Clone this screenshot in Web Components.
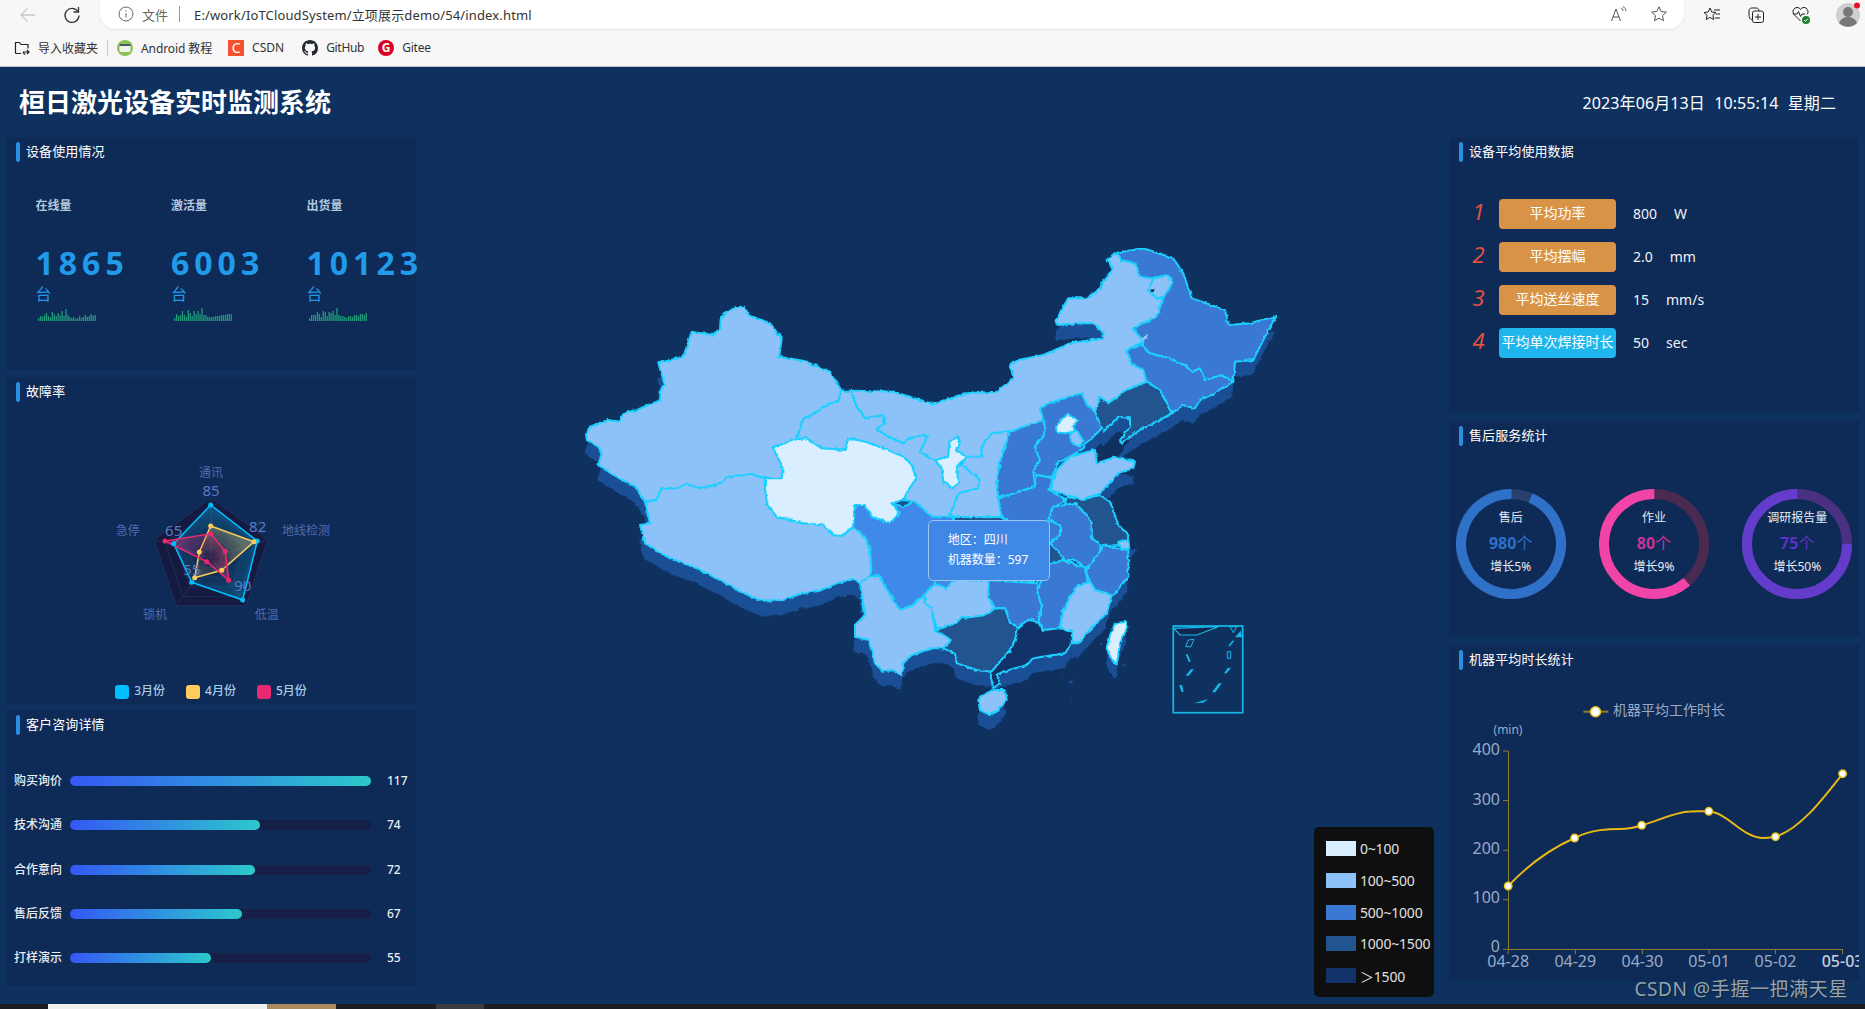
<!DOCTYPE html>
<html lang="zh">
<head>
<meta charset="utf-8">
<title>桓日激光设备实时监测系统</title>
<style>
  html, body { margin: 0; height: 100%; overflow: hidden; background: #0e315f; }
  body { font-family: "Noto Sans", "Noto Sans CJK SC", sans-serif; font-size: 12px; color: #fff; }
</style>
</head>
<body>
<x-browser-bar></x-browser-bar>
<x-dashboard>
  <div slot="left" style="display:contents">
    <x-panel title="设备使用情况" style="--h:233px">
      <x-stat-row>
        <x-stat label="在线量" value="1865" seed="3"></x-stat>
        <x-stat label="激活量" value="6003" seed="5"></x-stat>
        <x-stat label="出货量" value="10123" seed="7"></x-stat>
      </x-stat-row>
    </x-panel>
    <x-panel title="故障率" style="--h:327px"><x-radar></x-radar></x-panel>
    <x-panel title="客户咨询详情" style="--h:276px">
      <x-rank-list>
        <x-rank label="购买询价" value="117" width="301"></x-rank>
        <x-rank label="技术沟通" value="74" width="190"></x-rank>
        <x-rank label="合作意向" value="72" width="185"></x-rank>
        <x-rank label="售后反馈" value="67" width="172"></x-rank>
        <x-rank label="打样演示" value="55" width="141"></x-rank>
      </x-rank-list>
    </x-panel>
  </div>
  <x-china-map slot="center"></x-china-map>
  <div slot="right" style="display:contents">
    <x-panel title="设备平均使用数据" style="--h:276px">
      <x-avg-list>
        <x-avg num="1" label="平均功率" value="800" unit="W"></x-avg>
        <x-avg num="2" label="平均摆幅" value="2.0" unit="mm"></x-avg>
        <x-avg num="3" label="平均送丝速度" value="15" unit="mm/s"></x-avg>
        <x-avg num="4" label="平均单次焊接时长" value="50" unit="sec" active></x-avg>
      </x-avg-list>
    </x-panel>
    <x-panel title="售后服务统计" style="--h:216px">
      <x-donut-row>
        <x-donut name="售后" value="980" growth="增长5%" start="23" color="#2f70c8" track="#29406e" text="#2f70c8"></x-donut>
        <x-donut name="作业" value="80" growth="增长9%" start="139" color="#f044a8" track="#4a2a50" text="#c83596"></x-donut>
        <x-donut name="调研报告量" value="75" growth="增长50%" start="90" color="#643ccc" track="#4a3080" text="#5a34c4"></x-donut>
      </x-donut-row>
    </x-panel>
    <x-panel title="机器平均时长统计" style="--h:336px"><x-line-chart></x-line-chart></x-panel>
  </div>
</x-dashboard>
<x-bottom-strip></x-bottom-strip>

<script>
// browser chrome on top of the page
class BrowserBar extends HTMLElement {
  constructor() {
    super();
    this.attachShadow({ mode: 'open' });
    this.shadowRoot.innerHTML = `
      <style>
        :host { display: block; height: 67px; box-sizing: border-box; background: #f7f7f7; border-bottom: 1px solid #c4c4c4; color: #333; font-size: 12px; }
        .top { height: 32px; display: flex; align-items: flex-start; }
        .nav { width: 100px; height: 30px; flex: none; position: relative; }
        .nav svg { position: absolute; top: 5px; }
        .pill { flex: 1; height: 30px; margin-top: -1px; background: #fff; border-radius: 0 0 15px 15px; display: flex; align-items: center; padding-left: 18px; box-shadow: 0 1px 2px rgba(0,0,0,.08); }
        .file { color: #666; font-size: 13px; margin-left: 8px; }
        .sep { width: 1px; height: 16px; background: #999; margin: 0 13px 0 11px; }
        .url { font-size: 13px; color: #333; letter-spacing: .14px; margin-left: 1px; }
        .sp { flex: 1; }
        .tools { width: 181px; flex: none; display: flex; align-items: center; height: 30px; padding-left: 19px; gap: 26px; box-sizing: border-box; }
        .marks { height: 33px; display: flex; align-items: center; padding-left: 14px; margin-top: -1px; }
        .mk { display: flex; align-items: center; gap: 8px; margin-right: 9px; }
        .bsep { width: 1px; height: 16px; background: #ccc; margin: 0 9px 0 0; }
        .csdn { width: 16px; height: 16px; background: #f4512c; color: #fff; text-align: center; line-height: 16px; font-size: 14px; }
        .gitee { width: 16px; height: 16px; border-radius: 50%; background: #d9001f; color: #fff; text-align: center; line-height: 16px; font-size: 12px; font-weight: 700; }
      </style>
      <div class="top">
        <div class="nav">
          <svg style="left:19px" width="18" height="20" viewBox="0 0 18 20" fill="none" stroke="#c9c9c9" stroke-width="1.3"><path d="M16 10H2M8.5 3.5 2 10l6.5 6.500"/></svg>
          <svg style="left:63px" width="18" height="20" viewBox="0 0 18 20" fill="none" stroke="#333" stroke-width="1.3"><path d="M14.800 6.500A7 7 0 1 0 16 10.500"/><path d="M15.500 2v5h-5"/></svg>
        </div>
        <div class="pill">
          <svg width="16" height="16" viewBox="0 0 16 16" fill="none" stroke="#666"><circle cx="8" cy="8" r="7"/><path d="M8 7v4.500M8 4.200v1.300"/></svg>
          <span class="file">文件</span><span class="sep"></span>
          <span class="url">E:/work/IoTCloudSystem/立项展示demo/54/index.html</span>
          <span class="sp"></span>
          <svg style="margin-right:22px" width="18" height="18" viewBox="0 0 18 18" fill="none" stroke="#555"><path d="M1.500 16 6 4l4.500 12M3 12h6"/><path d="M11 3c1.200.6 1.800 1.500 2 3M13 1.500c1.800 1 2.800 2.500 3 4.500"/></svg>
          <svg style="margin-right:16px" width="18" height="18" viewBox="0 0 18 18" fill="none" stroke="#555"><path d="m9 1.800 2.200 4.700 5.100.6-3.800 3.500 1 5.100L9 13.200l-4.500 2.500 1-5.100L1.700 7.100l5.100-.6z"/></svg>
        </div>
        <div class="tools">
          <svg width="18" height="18" viewBox="0 0 18 18" fill="none" stroke="#222"><path d="m7 2 1.800 4 4.200.5-3.100 2.900.9 4.100L7 11.400 3.200 13.500l.9-4.100L1 6.500 5.200 6z"/><path d="M11 4h6M13 8h4M12 12h5"/></svg>
          <svg width="18" height="18" viewBox="0 0 18 18" fill="none" stroke="#222"><rect x="5.500" y="5" width="11" height="11.500" rx="2"/><path d="M11 8v6M8 11h6M5 14C3 13 2 11.500 2 9V5c0-2 1-3 3-3h4c2 0 3 1 3 3"/></svg>
          <svg width="20" height="20" viewBox="0 0 20 20" fill="none" stroke="#222"><path d="M9.500 16 3 9.500C.5 6.500 3 2.500 6 2.500c1.500 0 2.800.7 3.500 2 .7-1.300 2-2 3.500-2 3 0 5.500 4 3 7"/><path d="M2 9h4l1.500-2.500 2 5L11 9h3"/><circle cx="15" cy="15" r="4" fill="#1b7f2a" stroke="none"/><path d="m13 15 1.500 1.500 2.500-3" stroke="#fff"/></svg>
          <svg width="26" height="26" viewBox="0 0 26 26" style="margin-left:-2px;margin-top:-1px"><circle cx="13" cy="13" r="12" fill="#cfcfcf"/><circle cx="13" cy="10" r="5" fill="#777"/><path d="M4 21c2-5 6-6 9-6s7 1 9 6c-5 5-13 5-18 0z" fill="#777"/><circle cx="22" cy="3.500" r="3" fill="#e81123"/></svg>
        </div>
      </div>
      <div class="marks">
        <div class="mk"><svg width="16" height="16" viewBox="0 0 16 16" fill="none" stroke="#222" stroke-width="1.200"><path d="M7 13.500H2.500a1 1 0 0 1-1-1V2.500h4l1.500 2h7v4"/><path d="M9 12h6M13 10l2 2-2 2M11 14.500l-2-2"/></svg><span>导入收藏夹</span></div>
        <span class="bsep"></span>
        <div class="mk"><svg width="16" height="16" viewBox="0 0 16 16"><circle cx="8" cy="8" r="8" fill="#8cc152"/><rect x="2.500" y="4" width="11" height="8" rx="1" fill="#eef3ea"/><rect x="2.500" y="4" width="11" height="2" fill="#44586a"/></svg><span style="letter-spacing:-.1px">Android 教程</span></div>
        <div class="mk" style="margin-left:7px"><span class="csdn">C</span><span>CSDN</span></div>
        <div class="mk" style="margin-left:9px"><svg width="16" height="16" viewBox="0 0 16 16" fill="#24292f"><path d="M8 0C3.580 0 0 3.580 0 8c0 3.540 2.290 6.530 5.470 7.590.4.070.55-.17.55-.38 0-.19-.01-.82-.01-1.490-2.010.37-2.530-.49-2.690-.94-.09-.23-.48-.94-.82-1.130-.28-.15-.68-.52-.01-.53.63-.01 1.080.58 1.230.82.720 1.210 1.870.87 2.330.66.070-.52.280-.87.510-1.070-1.780-.2-3.640-.89-3.640-3.950 0-.87.310-1.590.820-2.150-.08-.2-.36-1.020.08-2.120 0 0 .67-.21 2.200.82.640-.18 1.320-.27 2-.27.680 0 1.360.090 2 .27 1.530-1.040 2.200-.82 2.200-.82.440 1.100.160 1.920.080 2.120.510.560.820 1.270.820 2.150 0 3.070-1.870 3.750-3.650 3.950.290.250.540.730.540 1.480 0 1.070-.01 1.930-.01 2.200 0 .210.150.460.550.380A8.013 8.013 0 0 0 16 8c0-4.420-3.580-8-8-8z"/></svg><span style="letter-spacing:-.3px">GitHub</span></div>
        <div class="mk" style="margin-left:5px"><span class="gitee">G</span><span style="letter-spacing:-.2px">Gitee</span></div>
      </div>`;
  }
}
customElements.define('x-browser-bar', BrowserBar);

// main frame: header row, then three columns
class Dashboard extends HTMLElement {
  constructor() {
    super();
    this.attachShadow({ mode: 'open' });
    this.shadowRoot.innerHTML = `
      <style>
        :host { display: block; height: 937px; position: relative; background: #0e315f; overflow: hidden; }
        header { height: 70px; box-sizing: border-box; display: flex; justify-content: space-between; align-items: center; padding: 0 29px 0 19px; }
        h1 { margin: 0; font-size: 26px; line-height: 34px; font-weight: 700; }
        .clock { font-size: 16px; word-spacing: 5px; letter-spacing: .1px; }
        main { display: grid; grid-template-columns: 410px 1021px 410px; column-gap: 6px; padding: 0 6px; height: 867px; }
        .col { display: flex; flex-direction: column; gap: 6.500px; }
        .col.r { gap: 8px; }
        .mark { position: absolute; right: 17px; bottom: 1px; font-size: 19px; line-height: 28px; color: #93a3b3; text-shadow: 1px 1px 1px #10202f; letter-spacing: .6px; }
      </style>
      <header><h1>桓日激光设备实时监测系统</h1><div class="clock">2023年06月13日 10:55:14 星期二</div></header>
      <main>
        <div class="col"><slot name="left"></slot></div>
        <div><slot name="center"></slot></div>
        <div class="col r"><slot name="right"></slot></div>
      </main>
      <div class="mark">CSDN @手握一把满天星</div>`;
  }
}
customElements.define('x-dashboard', Dashboard);

class Panel extends HTMLElement {
  constructor() {
    super();
    this.attachShadow({ mode: 'open' });
    this.shadowRoot.innerHTML = `
      <style>
        :host { display: block; height: var(--h); background: #0e2a56; position: relative; }
        .head { height: 36px; box-sizing: border-box; padding: 5px 0 0 10px; display: flex; gap: 6px; }
        .bar { width: 4px; height: 20px; border-radius: 2px; background: #2a8fe0; }
        .t { font-size: 13px; line-height: 18px; color: #fff; letter-spacing: .1px; }
      </style>
      <div class="head"><span class="bar"></span><span class="t"></span></div>
      <slot></slot>`;
  }
  connectedCallback() {
    this.shadowRoot.querySelector('.t').textContent = this.getAttribute('title');
    this.removeAttribute('title');
  }
}
customElements.define('x-panel', Panel);

class StatRow extends HTMLElement {
  constructor() {
    super();
    this.attachShadow({ mode: 'open' });
    this.shadowRoot.innerHTML = `<style>:host { display: grid; grid-template-columns: repeat(3, 135.500px); padding: 24px 0 0 29.500px; }</style><slot></slot>`;
  }
}
customElements.define('x-stat-row', StatRow);

class Stat extends HTMLElement {
  constructor() {
    super();
    this.attachShadow({ mode: 'open' });
  }
  connectedCallback() {
    // sparkline bars, just a fixed wave nudged per item
    const base = [4,6,5,7,9,6,5,10,8,6,9,7,11,6,13,7,5,4,5,3,4,6,4,5,7,5,6,8,6,7];
    const seed = +this.getAttribute('seed');
    let bars = '';
    base.forEach((h, i) => {
      const v = h + ((i * seed) % 3) - 1;
      bars += `<rect x="${i * 1.95}" y="${13 - v}" width="1.300" height="${v}"/>`;
    });
    this.shadowRoot.innerHTML = `
      <style>
        :host { display: block; }
        .l { font-size: 12px; line-height: 18px; font-weight: 700; color: #b3c8de; }
        .n { margin-top: 28px; font-size: 32px; line-height: 40px; font-weight: 700; letter-spacing: 5px; color: #219aea; white-space: nowrap; }
        .u { margin-top: 1px; font-size: 16px; line-height: 20px; color: #219aea; }
        svg { display: block; margin: 4px 0 0 2.500px; }
      </style>
      <div class="l">${this.getAttribute('label')}</div>
      <div class="n">${this.getAttribute('value')}</div>
      <div class="u">台</div>
      <svg width="58" height="13" fill="#1f9a78">${bars}</svg>`;
  }
}
customElements.define('x-stat', Stat);

class Radar extends HTMLElement {
  constructor() {
    super();
    this.attachShadow({ mode: 'open' });
    const ring = k => [[211,-60],[268,-18.500],[246,48],[176,48],[154,-18.500]]
      .map(p => `${(211 + (p[0] - 211) * k).toFixed(1)},${(557 + p[1] * k).toFixed(1)}`).join(' ');
    const rings = [.2,.4,.6,.8,1].map(k => `<polygon points="${ring(k)}"/>`).join('');
    const dots = (pts, c) => pts.split(' ').map(p => { const a = p.split(','); return `<circle cx="${a[0]}" cy="${a[1]}" r="2.500" fill="${c}"/>`; }).join('');
    const cy = '210.700,504 257.300,540 242.700,599 191.700,581.300 173.700,542.700';
    const ye = '210.700,525 254,540.700 221.700,569.300 194.700,576.700 199.300,551';
    const pk = '210.700,532.700 225.300,550.300 228.700,579.300 206.700,560.700 165,540';
    this.shadowRoot.innerHTML = `
      <style>
        :host { display: block; }
        svg { display: block; }
        text { font-size: 12px; fill: #4f6db0; text-anchor: middle; dominant-baseline: central; }
        text.v { font-size: 15px; fill: #5a7ac4; }
        .lg { display: flex; justify-content: center; gap: 21px; margin-top: 8px; }
        .it { display: flex; align-items: center; gap: 5px; font-size: 12px; line-height: 14px; color: #a6cbea; font-weight: 500; }
        .it b { font-weight: 500; margin-top: -2px; }
        .sw { width: 14px; height: 14px; border-radius: 3px; }
      </style>
      <svg width="410" height="264" viewBox="6 412 410 264">
        <defs>
          <radialGradient id="gc" gradientUnits="userSpaceOnUse" cx="211" cy="557" r="62"><stop offset="0" stop-color="#00c3ff" stop-opacity="0"/><stop offset="1" stop-color="#00c3ff" stop-opacity=".4"/></radialGradient>
          <radialGradient id="gy" gradientUnits="userSpaceOnUse" cx="211" cy="557" r="36"><stop offset="0" stop-color="#ffcf5f" stop-opacity="0"/><stop offset="1" stop-color="#ffcf5f" stop-opacity=".32"/></radialGradient>
          <radialGradient id="gp" gradientUnits="userSpaceOnUse" cx="205" cy="555" r="42"><stop offset="0" stop-color="#e8286f" stop-opacity=".06"/><stop offset="1" stop-color="#e8286f" stop-opacity=".5"/></radialGradient>
        </defs>
        <g fill="none" stroke="#1c2e5c">
          <polygon points="${ring(1)}" fill="#141a40"/>
          ${rings}
          <path d="M211 557V497M211 557L268 538.500M211 557L246 605M211 557L176 605M211 557L154 538.500"/>
        </g>
        <polygon points="${cy}" fill="url(#gc)" stroke="#00bfff" stroke-width="1.500"/>
        <polygon points="${ye}" fill="url(#gy)" stroke="#ffcc5c" stroke-width="1.500"/>
        <polygon points="${pk}" fill="url(#gp)" stroke="#e8286f" stroke-width="1.500"/>
        ${dots(cy, '#00bfff')}${dots(ye, '#ffcc5c')}${dots(pk, '#e8286f')}
        <text x="211" y="471.500">通讯</text>
        <text x="306" y="529.500">地线检测</text>
        <text x="266.700" y="613.500">低温</text>
        <text x="155" y="613.500">锁机</text>
        <text x="127.700" y="529.500">急停</text>
        <text class="v" x="211" y="489">85</text>
        <text class="v" x="257.700" y="525">82</text>
        <text class="v" x="242.700" y="584">90</text>
        <text class="v" x="191.700" y="567.500">55</text>
        <text class="v" x="173.700" y="528.500">65</text>
      </svg>
      <div class="lg">
        <div class="it"><span class="sw" style="background:#00bfff"></span><b>3月份</b></div>
        <div class="it"><span class="sw" style="background:#ffcc5c"></span><b>4月份</b></div>
        <div class="it"><span class="sw" style="background:#e8286f"></span><b>5月份</b></div>
      </div>`;
  }
}
customElements.define('x-radar', Radar);

class RankList extends HTMLElement {
  constructor() {
    super();
    this.attachShadow({ mode: 'open' });
    this.shadowRoot.innerHTML = `<style>:host { display: block; padding: 13px 0 0 8px; }</style><slot></slot>`;
  }
}
customElements.define('x-rank-list', RankList);

class Rank extends HTMLElement {
  constructor() {
    super();
    this.attachShadow({ mode: 'open' });
  }
  connectedCallback() {
    this.shadowRoot.innerHTML = `
      <style>
        :host { display: flex; align-items: center; height: 44.300px; }
        .l { width: 56px; margin-top: -2px; font-size: 12px; font-weight: 500; color: #e6edf5; }
        .t { width: 301px; height: 10px; border-radius: 5px; background: #161f45; }
        .f { height: 10px; border-radius: 5px; background: linear-gradient(90deg, #3558f5, #2bc9cc); }
        .v { margin-left: 16px; margin-top: -1px; font-size: 12px; font-weight: 500; color: #e6edf5; }
      </style>
      <span class="l">${this.getAttribute('label')}</span>
      <div class="t"><div class="f" style="width:${this.getAttribute('width')}px"></div></div>
      <span class="v">${this.getAttribute('value')}</span>`;
  }
}
customElements.define('x-rank', Rank);

class AvgList extends HTMLElement {
  constructor() {
    super();
    this.attachShadow({ mode: 'open' });
    this.shadowRoot.innerHTML = `<style>:host { display: flex; flex-direction: column; gap: 13px; padding: 26px 0 0 17px; }</style><slot></slot>`;
  }
}
customElements.define('x-avg-list', AvgList);

class Avg extends HTMLElement {
  constructor() {
    super();
    this.attachShadow({ mode: 'open' });
  }
  connectedCallback() {
    const bg = this.hasAttribute('active') ? '#1fb5ed' : '#d99346';
    this.shadowRoot.innerHTML = `
      <style>
        :host { display: flex; align-items: center; height: 30px; }
        .n { width: 25px; margin: -7px 8px 0 0; text-align: center; font-size: 22px; line-height: 24px; font-style: italic; color: #e0523f; }
        .b { width: 117px; height: 30px; border-radius: 4px; background: ${bg}; color: #fff; font-size: 14px; line-height: 28px; text-align: center; white-space: nowrap; overflow: hidden; }
        .v, .u { margin-left: 17px; margin-top: -2px; font-size: 14px; color: #eef3f8; }
      </style>
      <span class="n">${this.getAttribute('num')}</span>
      <div class="b">${this.getAttribute('label')}</div>
      <span class="v">${this.getAttribute('value')}</span>
      <span class="u">${this.getAttribute('unit')}</span>`;
  }
}
customElements.define('x-avg', Avg);

class DonutRow extends HTMLElement {
  constructor() {
    super();
    this.attachShadow({ mode: 'open' });
    this.shadowRoot.innerHTML = `<style>:host { display: flex; gap: 33.300px; padding: 32px 0 0 6.700px; }</style><slot></slot>`;
  }
}
customElements.define('x-donut-row', DonutRow);

class Donut extends HTMLElement {
  constructor() {
    super();
    this.attachShadow({ mode: 'open' });
  }
  connectedCallback() {
    const a = n => this.getAttribute(n);
    const c = 2 * Math.PI * 50;
    const start = +a('start');
    const on = c * (360 - start) / 360;
    this.shadowRoot.innerHTML = `
      <style>
        :host { display: block; width: 110px; height: 110px; position: relative; }
        svg { position: absolute; inset: 0; }
        .txt { position: absolute; inset: 0; display: flex; flex-direction: column; align-items: center; color: #e6edf5; font-size: 12px; white-space: nowrap; }
        .a { margin-top: 20px; line-height: 18px; }
        .b { margin-top: 4px; line-height: 24px; font-size: 16px; font-weight: 700; }
        .b i { font-style: normal; font-weight: 400; }
        .c { margin-top: 3px; line-height: 18px; }
      </style>
      <svg width="110" height="110" viewBox="0 0 110 110" fill="none" stroke-width="10">
        <circle cx="55" cy="55" r="50" stroke="${a('track')}"/>
        <circle cx="55" cy="55" r="50" stroke="${a('color')}" stroke-dasharray="${on} ${c}" transform="rotate(${start - 90} 55 55)"/>
      </svg>
      <div class="txt">
        <div class="a">${a('name')}</div>
        <div class="b" style="color:${a('text')}">${a('value')}<i>个</i></div>
        <div class="c">${a('growth')}</div>
      </div>`;
  }
}
customElements.define('x-donut', Donut);

class LineChart extends HTMLElement {
  constructor() {
    super();
    this.attachShadow({ mode: 'open' });
    const xs = [1508.2, 1575.3, 1642.4, 1709.1, 1775.5, 1842.6];
    const days = ['04-28','04-29','04-30','05-01','05-02','05-03'];
    const pts = [[1508.2,886],[1574.6,838],[1641.7,825.3],[1708.8,811.3],[1775.5,836.7],[1842.6,773.7]];
    const yl = [[400,748.5],[300,798.8],[200,847.8],[100,896.8],[0,946.2]];
    const ty = [751,800.6,850.2,899.7,949.3];
    this.shadowRoot.innerHTML = `
      <style>
        :host { display: block; }
        svg { display: block; }
        text { font-size: 16px; fill: #98aac8; dominant-baseline: central; }
      </style>
      <svg width="410" height="300" viewBox="1449 681 410 300">
        <path d="M1583.400 711.700H1608.300" stroke="#8c7f35" stroke-width="2"/>
        <circle cx="1595.500" cy="711.700" r="5" fill="#fff" stroke="#e8c020" stroke-width="1.500"/>
        <text x="1613" y="709.500" style="font-size:14px">机器平均工作时长</text>
        <text x="1508" y="729" text-anchor="middle" style="font-size:12px">(min)</text>
        <g stroke="#8c7f35" fill="none">
          <path d="M1508.500 751V949.500H1843"/>
          ${ty.map(y => `<path d="M1503 ${y}H1508"/>`).join('')}
          ${xs.map(x => `<path d="M${x} 949.500V954"/>`).join('')}
        </g>
        ${yl.map(l => `<text x="1500" y="${l[1]}" text-anchor="end">${l[0]}</text>`).join('')}
        ${days.map((d, i) => `<text x="${xs[i]}" y="961" text-anchor="middle"${i == 5 ? ' style="fill:#c4cfe0;font-weight:500"' : ''}>${d}</text>`).join('')}
        <path fill="none" stroke="#e8b816" stroke-width="2" d="M1508.200 886C1528 865 1552 848 1574.600 838C1592 829 1610 829 1620 829C1628 829 1634 828 1641.700 825.300C1660 820 1675 812 1690 811.500C1697 811 1702 811.300 1708.800 811.300C1728 813 1742 837 1762 838C1766 838 1771 837.500 1775.500 836.700C1800 829 1822 800 1842.600 773.700"/>
        ${pts.map(p => `<circle cx="${p[0]}" cy="${p[1]}" r="3.700" fill="#fff" stroke="#e8c020" stroke-width="1.500"/>`).join('')}
      </svg>`;
  }
}
customElements.define('x-line-chart', LineChart);

// map outlines traced off zoomed crops, so each list is in 3x crop coordinates with its own origin
const Z7 = [570, 230], Z8 = [900, 230], Z9 = [820, 500];
const L0 = '#d9eeff', L1 = '#8cc2f7', L2 = '#3a79d3', L3 = '#22548f', L4 = '#12336a';
const PROVINCES = [
  [Z7, L1, '495,232 525,230 535,255 600,280 635,325 628,380 700,392 780,425 815,482 805,515 775,522 735,550 700,568 680,628 608,652 640,715 635,745 585,745 545,732 475,742 440,765 385,775 350,762 320,775 275,775 258,810 225,815 195,770 130,735 85,705 95,670 85,650 50,630 48,612 60,590 115,570 150,575 160,550 200,540 270,510 272,480 285,465 265,400 340,380 365,305 430,315 450,300 452,262'],
  [Z9, L1, '-525,5 -492,0 -475,-35 -430,-35 -400,-48 -365,-35 -310,-45 -275,-68 -205,-78 -165,-65 -165,-35 -158,15 -130,50 -50,70 10,75 40,105 65,108 100,80 135,110 150,150 155,205 150,228 120,250 100,238 50,250 0,272 -60,282 -110,300 -176,302 -240,275 -300,240 -370,205 -450,175 -525,130 -540,75 -510,70'],
  [Z7, L1, '815,482 805,515 775,522 735,550 700,568 680,628 710,625 755,655 825,660 835,625 885,635 940,655 1000,680 1025,705 1038,745 1015,780 1000,810 1035,815 1085,860 1135,865 1155,820 1165,790 1225,775 1228,745 1175,705 1160,710 1115,715 1095,690 1050,665 1075,615 1025,620 1000,640 965,625 920,598 945,580 940,555 885,565 860,530 845,482'],
  [Z7, L0, '608,652 680,628 710,625 755,655 825,660 835,625 885,635 940,655 1000,680 1025,705 1038,745 1015,780 1000,810 965,820 990,850 960,880 905,860 885,825 855,825 850,890 815,918 790,915 760,885 700,880 620,860 592,825 585,775 585,745 635,745 640,715'],
  [Z8, L1, '-145,482 -20,485 100,522 200,490 290,485 340,445 330,405 355,390 430,375 510,340 610,325 610,310 580,280 540,280 470,285 470,265 505,205 555,205 590,185 640,115 620,90 650,68 665,90 705,100 720,140 760,145 745,180 770,205 790,205 770,260 700,295 730,335 680,360 695,400 730,420 740,455 680,480 625,520 600,500 585,545 560,525 545,490 510,500 445,520 420,535 430,570 330,605 275,610 245,650 245,680 198,680 165,665 175,620 150,635 145,680 105,690 60,665 85,615 35,620 10,640 -25,625 -70,598 -45,580 -50,555 -105,565 -130,530'],
  [Z8, L1, '760,145 800,135 820,155 790,205 770,205 745,180'],
  [Z8, L1, '330,605 275,610 245,650 245,680 198,680 185,705 238,745 235,775 175,790 165,820 145,865 85,880 160,920 270,920 270,862 305,860 295,805 290,740 305,680'],
  [Z7, L0, '1095,690 1135,680 1138,635 1165,620 1170,640 1158,662 1188,680 1160,710 1165,760 1150,775 1120,755 1115,715'],
  [Z8, L2, '330,605 430,570 438,605 405,650 420,690 400,725 405,770 295,805 290,740 305,680'],
  [Z8, L2, '420,535 445,520 510,500 545,490 560,525 585,545 610,590 570,630 555,640 550,655 510,680 470,700 460,745 410,735 400,725 420,690 405,650 438,605 430,570'],
  [Z8, L0, '468,590 480,570 505,553 535,570 520,590 525,605 495,610 470,605'],
  [Z8, L1, '510,610 530,600 548,630 540,650 515,640'],
  [Z8, L1, '450,780 470,720 510,680 585,660 590,700 650,680 705,695 700,715 655,730 600,790 550,810 500,795'],
  [Z8, L3, '585,545 600,500 625,520 680,480 740,455 780,480 815,550 770,575 720,600 665,640 660,630 690,590 690,565 655,560 610,605'],
  [Z8, L2, '680,360 725,345 750,370 810,385 855,405 875,425 900,415 915,450 965,435 1000,455 965,475 945,490 900,510 885,535 850,525 815,550 780,480 740,455 730,420 695,400'],
  [Z8, L2, '650,68 730,55 820,85 850,130 875,205 975,240 985,285 1050,280 1130,258 1110,290 1090,330 1060,390 1005,395 1000,455 965,435 915,450 900,415 875,425 855,405 810,385 750,370 725,345 730,335 700,295 770,260 790,205 820,155 800,135 760,145 720,140 705,100 665,90'],
  [Z8, L2, '295,805 405,770 410,735 460,745 445,780 500,810 460,830 445,870 480,885 480,915 450,940 320,870 305,860'],
  [Z8, L3, '270,862 305,860 320,870 450,940 490,970 485,995 450,1000 410,1060 260,1050 160,1050 180,940 160,860'],
  [Z8, L3, '500,800 550,810 595,795 630,815 655,885 685,915 680,950 650,945 610,950 575,925 575,880 555,850 525,820 495,825'],
  [Z8, L2, '495,825 525,820 555,850 575,880 575,925 610,950 590,990 555,1015 525,990 490,990 480,970 450,940 480,915 480,885 445,870 460,830'],
  [Z9, L1, '895,125 925,120 928,145 905,152'],
  [Z9, L2, '850,135 895,145 925,150 925,230 880,285 825,270 810,245 795,205 805,205'],
  [Z9, L2, '650,270 690,190 730,180 795,205 805,250 770,258 750,290 725,345 720,385 670,390 655,365 665,320'],
  [Z9, L1, '720,385 725,345 750,290 770,258 810,245 825,270 875,285 860,340 800,400 775,430 755,430 755,395'],
  [Z9, L2, '505,240 650,250 650,270 665,320 655,365 625,360 595,380 570,370 555,325 525,325 505,290'],
  [Z9, L1, '315,280 345,250 380,265 400,240 505,240 505,290 525,325 500,345 425,355 395,375 350,385 335,325 315,310'],
  [Z9, '#3f8ae8', '105,15 135,15 155,50 210,70 240,40 215,10 250,20 285,5 335,50 400,50 420,130 400,240 380,265 345,250 315,280 310,285 280,315 240,330 195,260 175,225 150,228 155,205 150,150 135,110 100,80'],
  [Z9, L1, '150,228 175,225 195,260 240,330 280,315 310,285 315,310 335,325 345,390 395,420 370,445 340,445 275,465 250,490 245,525 215,510 190,515 165,490 145,420 105,410 105,375 135,345 120,250'],
  [Z9, L3, '345,390 395,375 425,355 500,345 525,325 555,325 570,370 595,380 585,420 570,450 540,485 515,515 470,510 410,490 405,460 370,445 395,420'],
  [Z9, L4, '595,380 625,360 655,365 670,390 720,385 755,395 755,430 735,460 640,475 620,495 550,515 530,525 540,550 520,565 512,530 515,515 540,485 570,450 585,420'],
  [Z9, L1, '480,590 520,570 555,570 560,600 530,635 510,645 480,630 475,600'],
  [Z9, L0, '885,370 920,365 922,385 900,430 890,495 870,470 860,445 870,405'],
];
const toPath = (o, s) => 'M' + s.trim().split(/\s+/).map(p => {
  const a = p.split(',').map(Number);
  return (o[0] + a[0] / 3).toFixed(1) + ' ' + (o[1] + a[1] / 3).toFixed(1);
}).join('L') + 'Z';

class ChinaMap extends HTMLElement {
  constructor() {
    super();
    this.attachShadow({ mode: 'open' });
    const paths = PROVINCES.map(p => ({ d: toPath(p[0], p[2]), fill: p[1] }));
    const isle = s => `<path d="${toPath(Z9, s)}"/>`;
    this.shadowRoot.innerHTML = `
      <style>
        :host { display: block; position: relative; height: 867px; }
        svg { display: block; }
      </style>
      <svg width="1021" height="867" viewBox="422 137 1021 867">
        <defs>
          <filter id="rough" x="0" y="0" width="100%" height="100%" filterUnits="objectBoundingBox" color-interpolation-filters="sRGB">
            <feTurbulence type="fractalNoise" baseFrequency=".2" numOctaves="2" seed="4"/>
            <feDisplacementMap in="SourceGraphic" scale="3.500" xChannelSelector="R" yChannelSelector="G"/>
          </filter>
        </defs>
        <g filter="url(#rough)">
          <g fill="#1a4f96" transform="translate(-1 15)">
            ${paths.map(p => `<path d="${p.d}"/>`).join('')}
          </g>
          <g fill="#1a4f96">
            ${isle('745,545 757,540 758,550')}${isle('722,528 728,528 728,533')}${isle('750,588 755,588 755,595')}${isle('838,432 850,427 846,436')}${isle('908,490 920,497 908,497')}
            ${isle('925,150 950,146 930,185')}
          </g>
          <g stroke="#1cd0ff" stroke-width="2" stroke-linejoin="round">
            ${paths.map(p => `<path d="${p.d}" fill="${p.fill}"/>`).join('')}
          </g>
          <path d="${toPath(Z8, '722,322 742,316 742,328 726,332')}" fill="${L1}"/>
          <path d="${toPath(Z8, '752,178 765,178 765,186 752,186')}" fill="${L4}"/>
        </g>
        <g fill="none" stroke="#17b9e8">
          <rect x="1173.300" y="626" width="69.400" height="86.700" stroke-width="1.700"/>
          <path d="${toPath(Z9, '1062,385 1080,405 1130,405 1195,380')}" fill="#10264f" stroke-width="1.200"/>
          <path d="${toPath(Z9, '1230,380 1250,380 1240,398')}" stroke-width="1"/>
          <path d="${toPath(Z9, '1097,440 1105,420 1122,418 1113,440')}" stroke-width="1"/>
          <path d="${toPath(Z9, '1222,455 1232,455 1232,475 1222,475')}" stroke-width="1"/>
          <g fill="#17b9e8" stroke="none">
            <path d="${toPath(Z9, '1097,463 1103,463 1112,485 1106,485')}"/>
            <path d="${toPath(Z9, '1097,527 1112,508 1122,508 1106,527')}"/>
            <path d="${toPath(Z9, '1078,555 1086,555 1091,575 1084,575')}"/>
            <path d="${toPath(Z9, '1122,610 1165,597 1150,608')}"/>
            <path d="${toPath(Z9, '1176,577 1196,550 1205,550 1186,577')}"/>
            <path d="${toPath(Z9, '1212,520 1224,503 1233,503 1220,520')}"/>
            <path d="${toPath(Z9, '1225,438 1237,422 1243,422 1231,438')}"/>
            <path d="${toPath(Z9, '1245,412 1262,392 1266,412')}"/>
          </g>
        </g>
      </svg>
      <x-map-tip style="left:505.700px;top:383px"></x-map-tip>
      <x-map-legend style="left:892px;top:690px"></x-map-legend>`;
  }
}

class MapTip extends HTMLElement {
  constructor() {
    super();
    this.attachShadow({ mode: 'open' });
    this.shadowRoot.innerHTML = `
      <style>
        :host { position: absolute; width: 122px; height: 61px; box-sizing: border-box; padding: 9px 0 0 19px; background: #3f88e6; border: 1px solid #9cc6f0; border-radius: 5px; font-size: 12px; line-height: 20px; color: #fff; white-space: nowrap; }
      </style>
      <div>地区：四川</div><div>机器数量：597</div>`;
  }
}
customElements.define('x-map-tip', MapTip);

class MapLegend extends HTMLElement {
  constructor() {
    super();
    this.attachShadow({ mode: 'open' });
    const rows = [[L0,'0~100'],[L1,'100~500'],[L2,'500~1000'],[L3,'1000~1500'],[L4,'＞1500']];
    this.shadowRoot.innerHTML = `
      <style>
        :host { position: absolute; width: 120px; height: 170px; box-sizing: border-box; padding: 14px 0 0 12px; background: #0f0f0f; border-radius: 5px; display: flex; flex-direction: column; gap: 16.750px; }
        .r { display: flex; align-items: center; gap: 4px; height: 15px; font-size: 14px; color: #e0e0e0; white-space: nowrap; letter-spacing: -.2px; }
        .s { width: 30px; height: 15px; }
      </style>
      ${rows.map(r => `<div class="r"><span class="s" style="background:${r[0]}"></span>${r[1]}</div>`).join('')}`;
  }
}
customElements.define('x-map-legend', MapLegend);
customElements.define('x-china-map', ChinaMap);

class BottomStrip extends HTMLElement {
  constructor() {
    super();
    this.attachShadow({ mode: 'open' });
    this.shadowRoot.innerHTML = `
      <style>
        :host { display: flex; height: 5px; background: #1b1d20; }
        i { display: block; height: 5px; }
      </style>
      <i style="width:48px"></i><i style="width:219px;background:#efefef"></i><i style="width:69px;background:#a88a5c"></i><i style="width:100px"></i><i style="width:48px;background:#3a3c40"></i>`;
  }
}
customElements.define('x-bottom-strip', BottomStrip);
</script>
</body>
</html>
